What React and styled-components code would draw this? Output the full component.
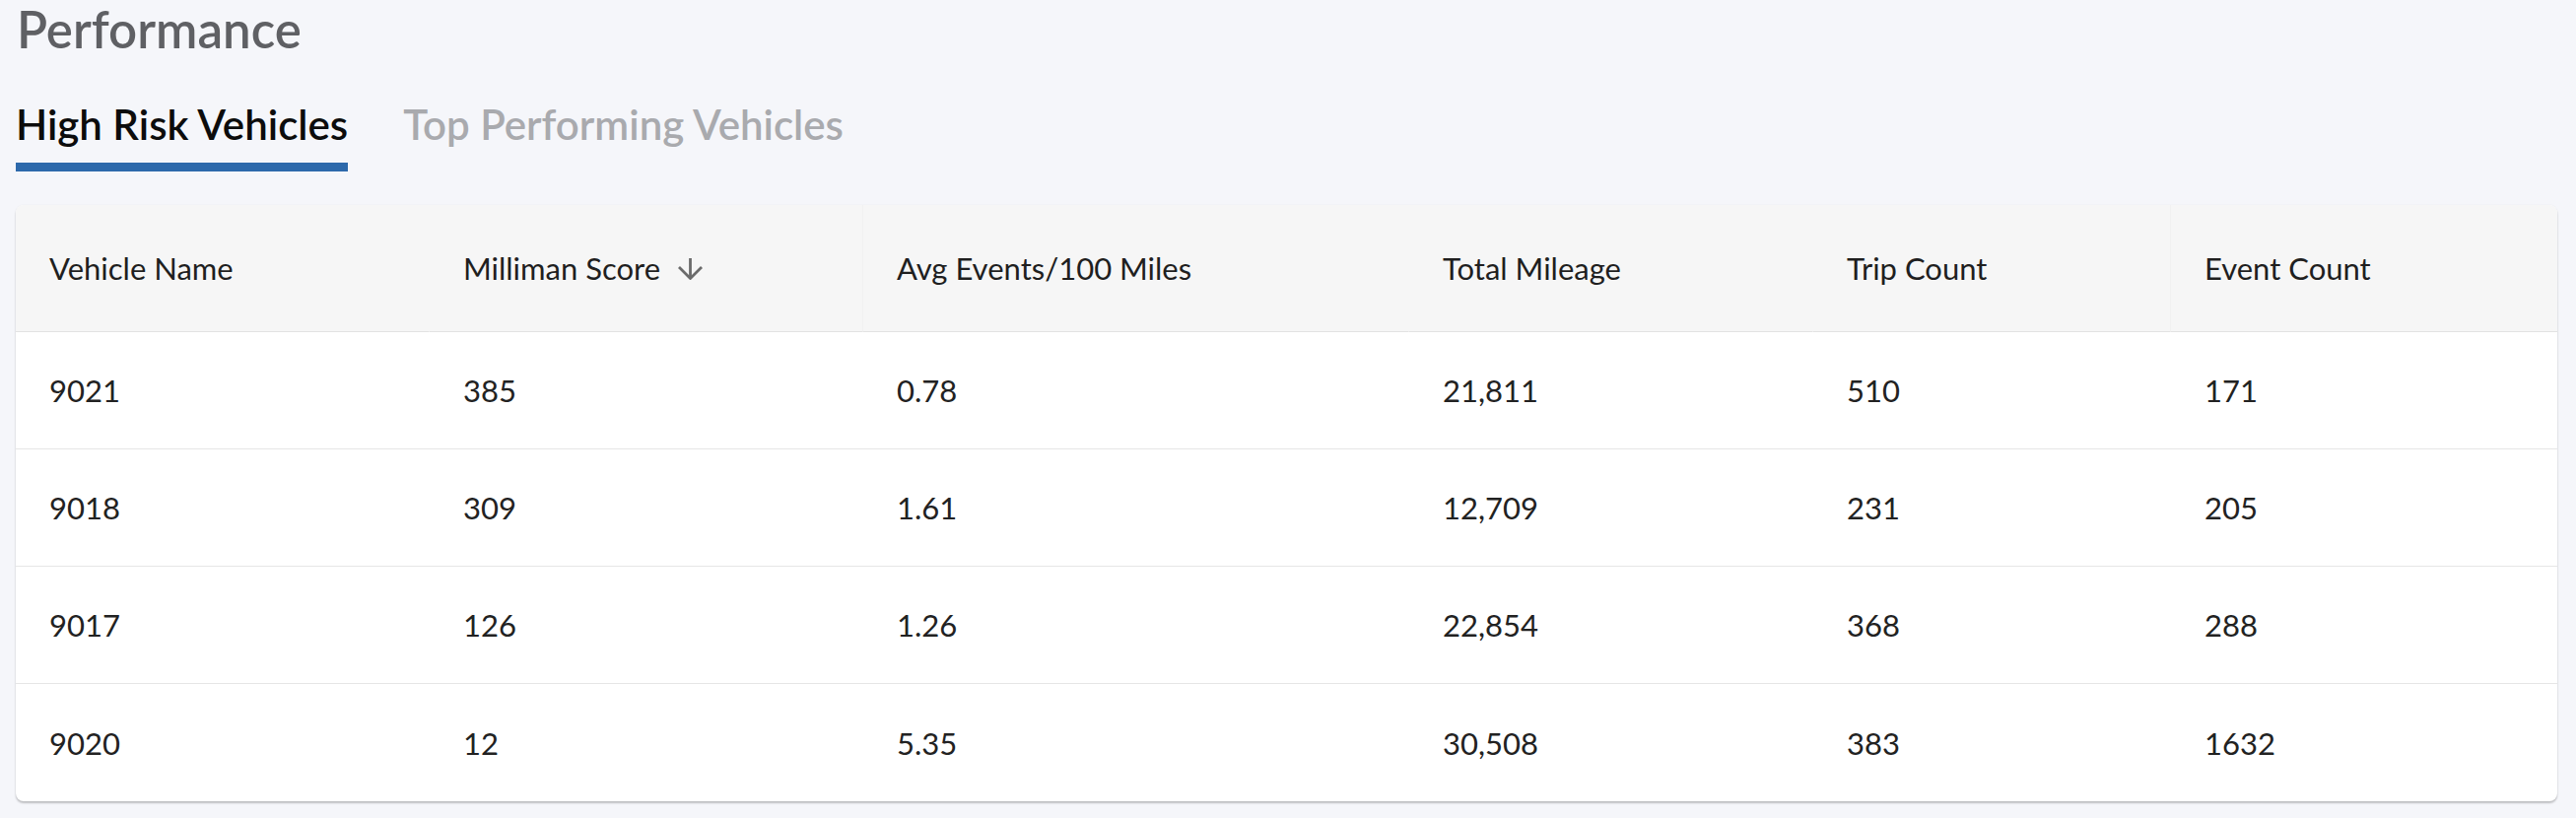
import React from 'react';
import styled, { createGlobalStyle } from 'styled-components';

const GlobalStyle = createGlobalStyle`
  html, body {
    margin: 0;
    padding: 0;
    background: #f5f6fa;
  }
  body {
    font-family: Lato, "Noto Sans", sans-serif;
    color: #222;
  }
`;

const Page = styled.div`
  padding: 2px 19px 20px 16px;
  background: #f5f6fa;
`;

const Title = styled.h2`
  margin: 0;
  padding-left: 1px;
  font-size: 51px;
  line-height: 1.1;
  font-weight: 600;
  color: #5f6064;
`;

const Tabs = styled.div`
  display: flex;
  gap: 56px;
  margin-top: 43px;
`;

const Tab = styled.button`
  border: none;
  background: none;
  padding: 0 0 14px;
  font-family: inherit;
  font-size: 42px;
  line-height: 1.2;
  font-weight: 600;
  cursor: pointer;
  color: ${(p) => (p.$active ? '#0c0c0c' : '#a9aaae')};
  border-bottom: 9px solid ${(p) => (p.$active ? '#2d69ab' : 'transparent')};
`;

const Card = styled.div`
  margin-top: 34px;
  background: #fff;
  border-radius: 8px;
  overflow: hidden;
  box-shadow: 0 2px 2px rgba(0, 0, 0, 0.22), 0 0 2px rgba(0, 0, 0, 0.06);
`;

const Grid = styled.div`
  display: grid;
  grid-template-columns: 420px 440px 554px 410px 363px 1fr;
`;

const HeadCell = styled.div`
  height: 128px;
  display: flex;
  align-items: center;
  gap: 17px;
  padding: 0 34px;
  background: #f6f6f6;
  border-bottom: 1px solid #e2e2e2;
  border-left: 1px solid ${(p) => (p.$divider ? '#f1f1f1' : 'transparent')};
  margin-left: -1px;
  font-size: 31px;
  font-weight: 400;
  color: #1f1f1f;
  white-space: nowrap;
`;

const Cell = styled.div`
  height: ${(p) => (p.$last ? 119 : 118)}px;
  display: flex;
  align-items: center;
  padding: 0 34px;
  border-bottom: ${(p) => (p.$last ? 'none' : '1px solid #e6e6e6')};
  font-size: 31px;
  color: #222;
`;

const SortIcon = () => (
  <svg width="27" height="23" viewBox="0 0 27 23" fill="none" stroke="#6b6b6b" strokeWidth="2.8">
    <path d="M13.5 1v20" />
    <path d="M2 10l11.5 11.5L25 10" />
  </svg>
);

const columns = [
  { label: 'Vehicle Name' },
  { label: 'Milliman Score', sorted: true },
  { label: 'Avg Events/100 Miles', divider: true },
  { label: 'Total Mileage' },
  { label: 'Trip Count' },
  { label: 'Event Count', divider: true },
];

const rows = [
  ['9021', '385', '0.78', '21,811', '510', '171'],
  ['9018', '309', '1.61', '12,709', '231', '205'],
  ['9017', '126', '1.26', '22,854', '368', '288'],
  ['9020', '12', '5.35', '30,508', '383', '1632'],
];

export default function App() {
  return (
    <Page>
      <GlobalStyle />
      <Title>Performance</Title>
      <Tabs>
        <Tab $active>High Risk Vehicles</Tab>
        <Tab>Top Performing Vehicles</Tab>
      </Tabs>
      <Card>
        <Grid>
          {columns.map((c) => (
            <HeadCell key={c.label} $divider={c.divider}>
              {c.label}
              {c.sorted && <SortIcon />}
            </HeadCell>
          ))}
          {rows.map((r, i) =>
            r.map((v, j) => (
              <Cell key={`${i}-${j}`} $last={i === rows.length - 1}>
                {v}
              </Cell>
            ))
          )}
        </Grid>
      </Card>
    </Page>
  );
}
